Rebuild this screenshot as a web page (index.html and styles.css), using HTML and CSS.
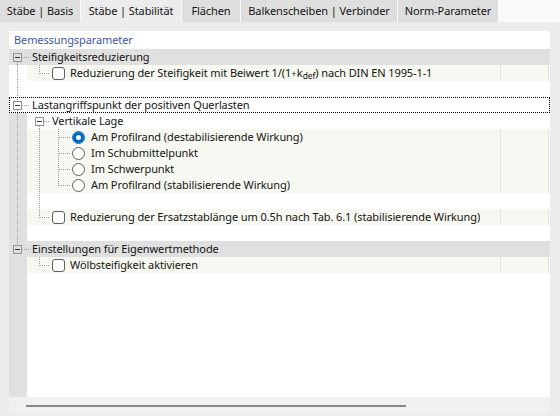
FILE: index.html
```html
<!DOCTYPE html>
<html lang="de">
<head>
<meta charset="utf-8">
<title>Stäbe | Stabilität</title>
<link rel="stylesheet" href="styles.css">
</head>
<body>
<div class="tabs">
  <div class="tab t1">Stäbe | Basis</div>
  <div class="tab t2 active">Stäbe | Stabilität</div>
  <div class="tab t3">Flächen</div>
  <div class="tab t4">Balkenscheiben | Verbinder</div>
  <div class="tab t5">Norm-Parameter</div>
</div>
<div class="panel">
  <div class="grid">
    <div class="title">Bemessungsparameter</div>

    <div class="row group first">
      <span class="exp"></span><span class="hl"></span>
      <span class="lbl">Steifigkeitsreduzierung</span>
    </div>
    <div class="row">
      <div class="gut v0"></div>
      <div class="main cream">
        <div class="ind last"></div>
        <span class="chk"></span>
        <span class="lbl">Reduzierung der Steifigkeit mit Beiwert 1/(1<span class="plus">+</span>k<sub>def</sub>) nach DIN EN 1995-1-1</span>
      </div>
      <div class="val cream"></div>
    </div>
    <div class="row">
      <div class="gut v0"></div>
      <div class="main"></div>
    </div>

    <div class="row group middle focus">
      <span class="exp"></span><span class="hl"></span>
      <span class="lbl">Lastangriffspunkt der positiven Querlasten</span>
    </div>
    <div class="row">
      <div class="gut gray v0"></div>
      <div class="main">
        <div class="ind sub"><span class="exp"></span><span class="hl"></span></div>
        <span class="lbl sublbl">Vertikale Lage</span>
      </div>
    </div>
    <div class="row">
      <div class="gut gray v0"></div>
      <div class="main cream">
        <div class="ind pass"></div>
        <div class="ind2 mid"></div>
        <span class="rad on"></span>
        <span class="lbl rlbl">Am Profilrand (destabilisierende Wirkung)</span>
      </div>
      <div class="val cream"></div>
    </div>
    <div class="row">
      <div class="gut gray v0"></div>
      <div class="main cream">
        <div class="ind pass"></div>
        <div class="ind2 mid"></div>
        <span class="rad"></span>
        <span class="lbl rlbl">Im Schubmittelpunkt</span>
      </div>
      <div class="val cream"></div>
    </div>
    <div class="row">
      <div class="gut gray v0"></div>
      <div class="main cream">
        <div class="ind pass"></div>
        <div class="ind2 mid"></div>
        <span class="rad"></span>
        <span class="lbl rlbl">Im Schwerpunkt</span>
      </div>
      <div class="val cream"></div>
    </div>
    <div class="row">
      <div class="gut gray v0"></div>
      <div class="main cream">
        <div class="ind pass"></div>
        <div class="ind2 last"></div>
        <span class="rad"></span>
        <span class="lbl rlbl">Am Profilrand (stabilisierende Wirkung)</span>
      </div>
      <div class="val cream"></div>
    </div>
    <div class="row">
      <div class="gut gray v0"></div>
      <div class="main">
        <div class="ind pass"></div>
      </div>
    </div>
    <div class="row">
      <div class="gut gray v0"></div>
      <div class="main cream">
        <div class="ind last"></div>
        <span class="chk"></span>
        <span class="lbl">Reduzierung der Ersatzstablänge um 0.5h nach Tab. 6.1 (stabilisierende Wirkung)</span>
      </div>
      <div class="val cream"></div>
    </div>
    <div class="row">
      <div class="gut gray v0"></div>
      <div class="main"></div>
    </div>

    <div class="row group lastgrp">
      <span class="exp"></span><span class="hl"></span>
      <span class="lbl">Einstellungen für Eigenwertmethode</span>
    </div>
    <div class="row">
      <div class="gut gray"></div>
      <div class="main cream">
        <div class="ind last"></div>
        <span class="chk"></span>
        <span class="lbl">Wölbsteifigkeit aktivieren</span>
      </div>
      <div class="val cream"></div>
    </div>

    <div class="fill"><div class="gut gray"></div></div>
  </div>
  <div class="hscroll"><div class="thumb"></div></div>
</div>
</body>
</html>
```

FILE: styles.css
```css
* { box-sizing: border-box; }

html, body {
  margin: 0;
  padding: 0;
}

body {
  width: 560px;
  height: 416px;
  overflow: hidden;
  background: #ececec;
  font-family: "Noto Sans", "Open Sans", sans-serif;
  font-size: 11px;
  letter-spacing: -0.1px;
  color: #141414;
}

/* ---------- tabs ---------- */
.tabs {
  display: flex;
  gap: 1px;
  height: 22px;
  background: #fafafa;
}

.tab {
  height: 22px;
  line-height: 22px;
  text-align: center;
  background: #dedede;
  white-space: nowrap;
}

.tab.active { background: #ececec; }
.t1 { width: 80px; }
.t2 { width: 100px; }
.t3 { width: 58px; }
.t4 { width: 156px; }
.t5 { width: 100px; }

/* ---------- panel ---------- */
.panel {
  height: 394px;
  padding: 9px 10px 2px 9px;
  display: flex;
  flex-direction: column;
}

.grid {
  flex: 1;
  background: #ffffff;
  display: flex;
  flex-direction: column;
}

.title {
  height: 18px;
  line-height: 18px;
  padding-left: 5px;
  color: #41589a;
}

.row {
  height: 16px;
  display: flex;
  align-items: stretch;
  line-height: 16px;
  white-space: nowrap;
}

.lbl {
  overflow: hidden;
  white-space: nowrap;
}

sub {
  font-size: 8.5px;
  vertical-align: -2px;
  line-height: 0;
}

.plus {
  font-size: 8.5px;
  padding: 0 0.5px;
}

/* dotted tree lines */
.gut {
  width: 18px;
  flex: none;
  background-repeat: no-repeat;
}

.gut.gray { background-color: #e0e0e0; }

.gut.v0 {
  background-image: repeating-linear-gradient(to bottom, #9c9c9c 0 1px, transparent 1px 2px);
  background-position: 8px 0;
  background-size: 1px 100%;
}

.main {
  flex: 1;
  display: flex;
  align-items: center;
  min-width: 0;
  overflow: hidden;
}

.cream { background-color: #f7f8f1; }

.val {
  width: 49px;
  flex: none;
  border-left: 1px solid #e2e2e2;
  border-right: 1px solid #e2e2e2;
  margin-right: 1px;
}

.ind {
  width: 23px;
  height: 16px;
  flex: none;
  background-repeat: no-repeat;
}

.ind.last {
  background-image:
    repeating-linear-gradient(to bottom, #9c9c9c 0 1px, transparent 1px 2px),
    repeating-linear-gradient(to right, #9c9c9c 0 1px, transparent 1px 2px);
  background-position: 12px 0, 13px 8px;
  background-size: 1px 9px, 10px 1px;
}

.ind.pass {
  background-image: repeating-linear-gradient(to bottom, #9c9c9c 0 1px, transparent 1px 2px);
  background-position: 12px 0;
  background-size: 1px 16px;
}

.ind.sub {
  display: flex;
  align-items: flex-start;
  background-image: repeating-linear-gradient(to bottom, #9c9c9c 0 1px, transparent 1px 2px);
  background-position: 12px 13px;
  background-size: 1px 3px;
}

.ind.sub .exp { margin-left: 8px; }
.ind.sub .hl { flex: 1; width: auto; }

.sublbl { margin-left: 2px; }

.ind2 {
  width: 20px;
  height: 16px;
  flex: none;
  background-repeat: no-repeat;
}

.ind2.mid {
  background-image:
    repeating-linear-gradient(to bottom, #9c9c9c 0 1px, transparent 1px 2px),
    repeating-linear-gradient(to right, #9c9c9c 0 1px, transparent 1px 2px);
  background-position: 8px 0, 9px 8px;
  background-size: 1px 16px, 11px 1px;
}

.ind2.last {
  background-image:
    repeating-linear-gradient(to bottom, #9c9c9c 0 1px, transparent 1px 2px),
    repeating-linear-gradient(to right, #9c9c9c 0 1px, transparent 1px 2px);
  background-position: 8px 0, 9px 8px;
  background-size: 1px 9px, 11px 1px;
}

/* group rows */
.group {
  background-color: #e0e0e0;
  background-repeat: no-repeat;
}

.group.first {
  background-image: repeating-linear-gradient(to bottom, #9c9c9c 0 1px, transparent 1px 2px);
  background-position: 8px 13px;
  background-size: 1px 3px;
}

.group.middle {
  background-image:
    repeating-linear-gradient(to bottom, #9c9c9c 0 1px, transparent 1px 2px),
    repeating-linear-gradient(to bottom, #9c9c9c 0 1px, transparent 1px 2px);
  background-position: 8px 0, 8px 13px;
  background-size: 1px 4px, 1px 3px;
}

.group.lastgrp {
  background-image: repeating-linear-gradient(to bottom, #9c9c9c 0 1px, transparent 1px 2px);
  background-position: 8px 0;
  background-size: 1px 4px;
}

.group.focus {
  background-color: #ffffff;
  outline: 1px dotted #000;
  outline-offset: -1px;
}

.exp {
  width: 9px;
  height: 9px;
  flex: none;
  margin-top: 4px;
  border: 1px solid #929292;
  background: linear-gradient(#303030, #303030) center / 5px 1px no-repeat;
}

.group .exp { margin-left: 4px; }

.hl {
  width: 8px;
  height: 1px;
  flex: none;
  margin-top: 8px;
  background-image: repeating-linear-gradient(to right, #9c9c9c 0 1px, transparent 1px 2px);
}

.group .lbl { margin-left: 2px; }

/* controls */
.chk {
  width: 13px;
  height: 13px;
  flex: none;
  margin-left: 2px;
  margin-right: 5px;
  border: 1px solid #5f5f5f;
  border-radius: 3px;
  background: #fff;
}

.rad {
  width: 13px;
  height: 13px;
  flex: none;
  margin-left: 2px;
  margin-right: 6px;
  border: 1px solid #5f5f5f;
  border-radius: 50%;
  background: #fff;
}

.rad.on {
  border-color: #0067c0;
  box-shadow: inset 0 0 0 3px #0067c0;
}

/* bottom */
.fill {
  flex: 1;
  display: flex;
}

.hscroll {
  height: 17px;
  background: #f0f0f0;
  padding: 8px 0 0 17px;
}

.thumb {
  width: 380px;
  height: 2px;
  background: #898989;
}
```
